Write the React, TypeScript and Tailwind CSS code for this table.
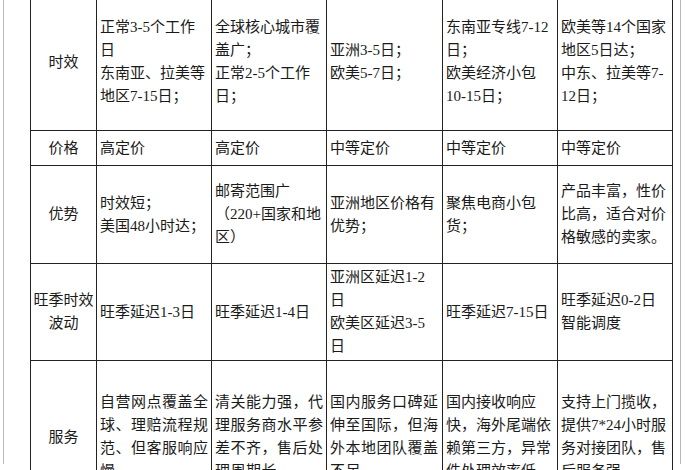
import React from "react";

type Row = {
  label: string[];
  height: string;
  cells: string[][];
  wide?: boolean;
};

const rows: Row[] = [
  {
    label: ["时效"],
    height: "h-[137px]",
    cells: [
      ["正常3-5个工作", "日", "东南亚、拉美等", "地区7-15日；"],
      ["全球核心城市覆", "盖广；", "正常2-5个工作", "日；"],
      ["亚洲3-5日；", "欧美5-7日；"],
      ["东南亚专线7-12", "日；", "欧美经济小包", "10-15日；"],
      ["欧美等14个国家", "地区5日达；", "中东、拉美等7-", "12日；"],
    ],
  },
  {
    label: ["价格"],
    height: "h-[35px]",
    cells: [["高定价"], ["高定价"], ["中等定价"], ["中等定价"], ["中等定价"]],
  },
  {
    label: ["优势"],
    height: "h-[98px]",
    cells: [
      ["时效短；", "美国48小时达；"],
      ["邮寄范围广", "（220+国家和地", "区）"],
      ["亚洲地区价格有", "优势；"],
      ["聚焦电商小包", "货；"],
      ["产品丰富，性价", "比高，适合对价", "格敏感的卖家。"],
    ],
  },
  {
    label: ["旺季时效", "波动"],
    height: "h-[97px]",
    cells: [
      ["旺季延迟1-3日"],
      ["旺季延迟1-4日"],
      ["亚洲区延迟1-2", "日", "欧美区延迟3-5", "日"],
      ["旺季延迟7-15日"],
      ["旺季延迟0-2日", "智能调度"],
    ],
  },
  {
    label: ["服务"],
    height: "h-[153px]",
    wide: true,
    cells: [
      ["自营网点覆盖全", "球、理赔流程规", "范、但客服响应", "慢。"],
      ["清关能力强，代", "理服务商水平参", "差不齐，售后处", "理周期长。"],
      ["国内服务口碑延", "伸至国际，但海", "外本地团队覆盖", "不足。"],
      ["国内接收响应", "快，海外尾端依", "赖第三方，异常", "件处理效率低。"],
      ["支持上门揽收，", "提供7*24小时服", "务对接团队，售", "后服务强。"],
    ],
  },
];

export default function App() {
  return (
    <div className="w-[700px] h-[470px] overflow-hidden bg-white font-['Liberation_Serif','Noto_Sans_CJK_SC',serif] text-[15px] leading-[23px] text-[#1a1a1a]">
      <div className="ml-[3px] w-[678px] h-full border-x border-[#b8b8b8]">
        <div className="ml-[26px] -mt-[6px] w-[642px] border-l border-[#222]">
          {rows.map((row, i) => (
            <div key={i} className={`grid grid-cols-[66px_115px_115px_116px_115px_115px] ${row.height}`}>
              <div className="flex flex-col items-center justify-center border-r border-b border-[#222] text-center">
                {row.label.map((l, k) => (
                  <div key={k} className="whitespace-nowrap">{l}</div>
                ))}
              </div>
              {row.cells.map((cell, j) => (
                <div
                  key={j}
                  className={`flex flex-col justify-center overflow-hidden border-r border-b border-[#222] pl-[3px] ${
                    row.wide && j < 3 ? "tracking-[0.5px]" : ""
                  }`}
                >
                  {cell.map((line, k) => (
                    <div key={k} className="whitespace-nowrap">{line}</div>
                  ))}
                </div>
              ))}
            </div>
          ))}
        </div>
      </div>
    </div>
  );
}
